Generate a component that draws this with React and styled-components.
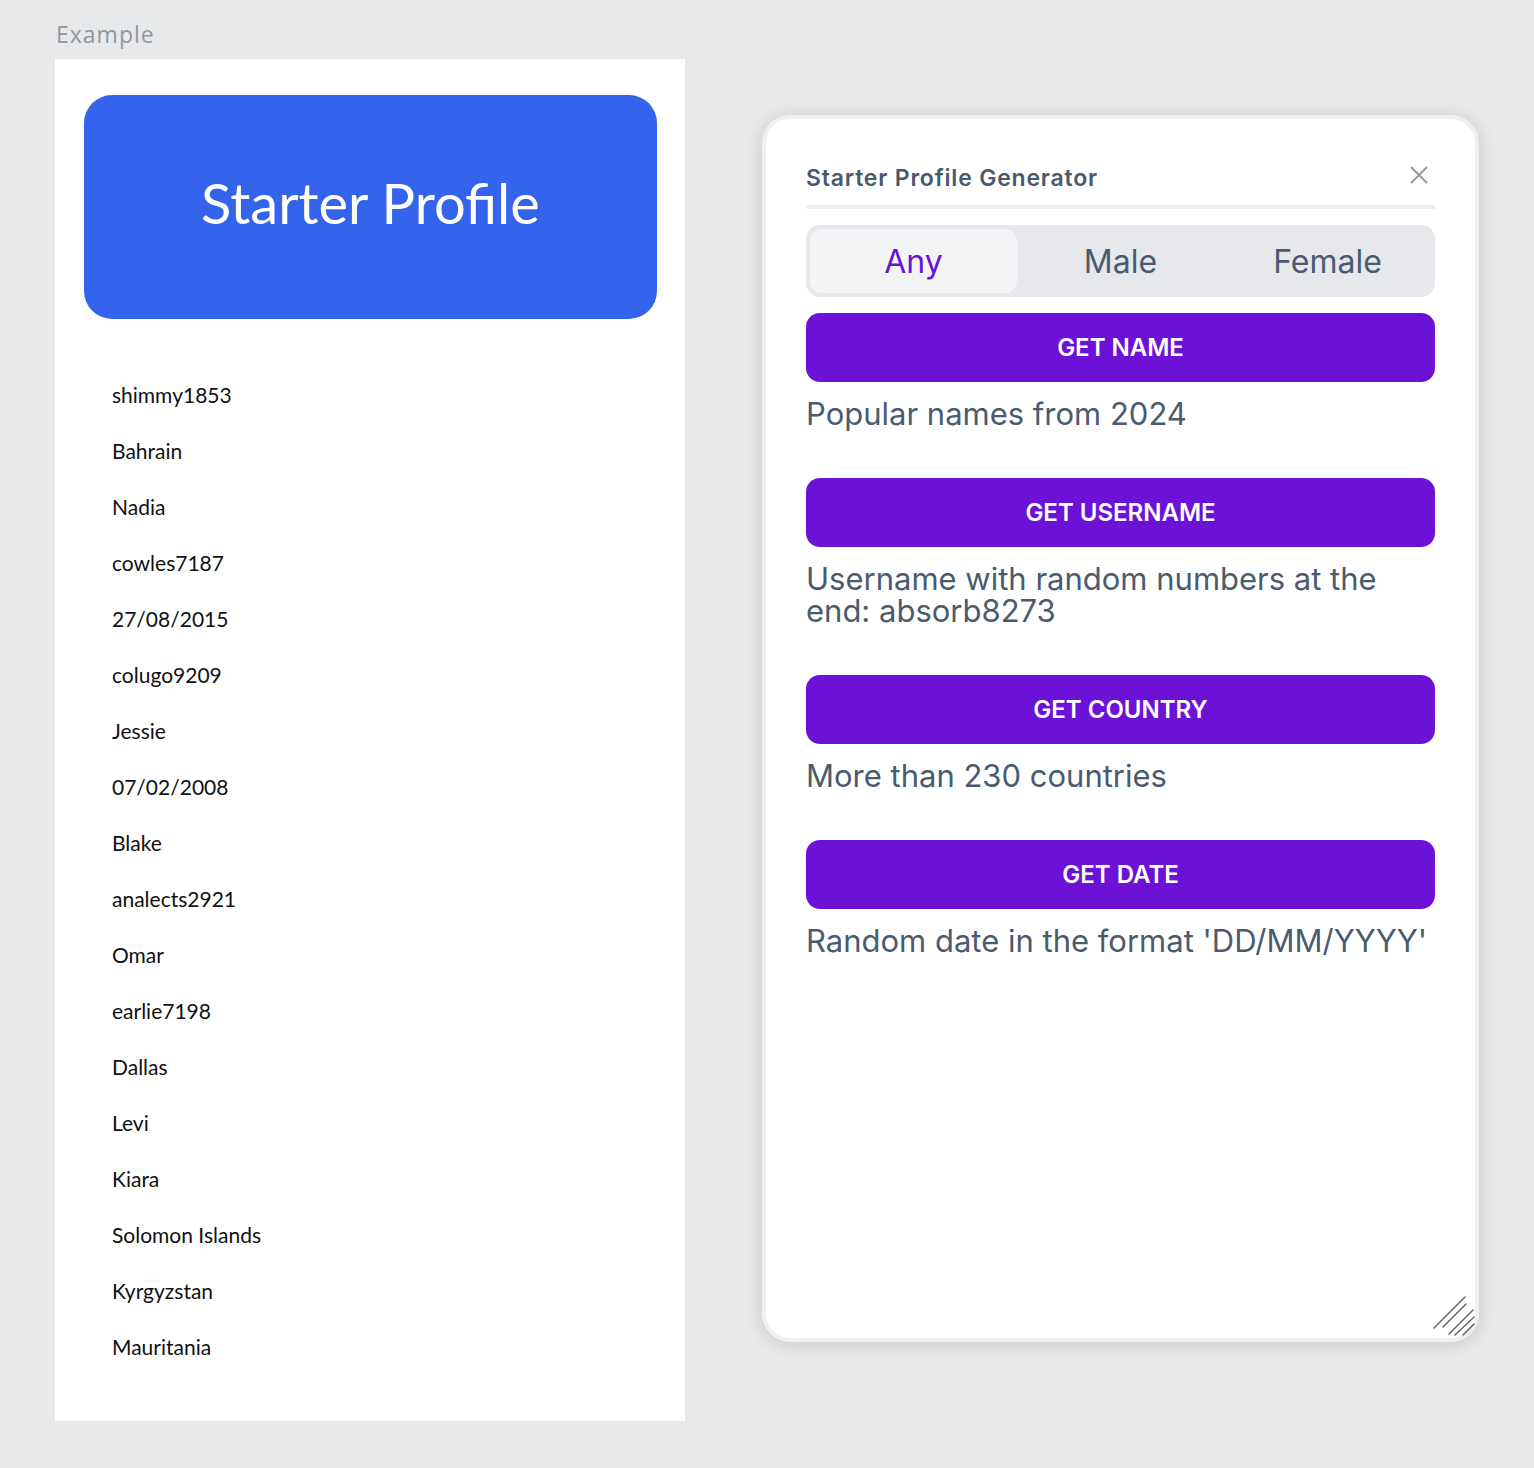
import React from "react";
import styled, { createGlobalStyle } from "styled-components";

const GlobalStyle = createGlobalStyle`
  html, body {
    margin: 0;
    padding: 0;
    background: #e8e9eb;
  }
  * {
    box-sizing: border-box;
  }
`;

const Page = styled.div`
  padding: 21px 55px 40px;
  min-height: 1468px;
`;

const Label = styled.div`
  font-family: "Open Sans", sans-serif;
  font-size: 23px;
  line-height: 26px;
  letter-spacing: 1px;
  color: #8f999f;
  margin-bottom: 12px;
  padding-left: 1px;
`;

const Row = styled.div`
  display: flex;
  align-items: flex-start;
  gap: 77px;
`;

const Preview = styled.div`
  width: 630px;
  background: #ffffff;
  padding: 36px 28px 46px 29px;
`;

const Hero = styled.div`
  height: 224px;
  border-radius: 28px;
  background: #3564ec;
  display: flex;
  align-items: center;
  justify-content: center;
  padding-bottom: 9px;
`;

const HeroTitle = styled.h1`
  margin: 0;
  font-family: Lato, sans-serif;
  font-weight: 400;
  font-size: 56px;
  color: #ffffff;
`;

const List = styled.ul`
  list-style: none;
  margin: 48px 0 0;
  padding: 0 0 0 28px;
`;

const Item = styled.li`
  height: 56px;
  line-height: 56px;
  font-family: Lato, sans-serif;
  font-size: 21px;
  color: #111111;
`;

const Panel = styled.div`
  position: relative;
  margin-top: 56px;
  width: 717px;
  height: 1227px;
  background: #ffffff;
  border: 4px solid #eff0f2;
  border-radius: 28px;
  box-shadow: 0 2px 18px rgba(0, 0, 0, 0.14);
  padding: 46px 40px 40px;
  display: flex;
  flex-direction: column;
`;

const Header = styled.div`
  display: flex;
  justify-content: space-between;
  align-items: flex-start;
  padding-bottom: 14px;
  border-bottom: 4px solid #edeef0;
`;

const PanelTitle = styled.h2`
  margin: 0;
  font-family: Inter, sans-serif;
  font-weight: 600;
  font-size: 23px;
  line-height: 26px;
  letter-spacing: 0.8px;
  color: #4a5a6e;
`;

const CloseButton = styled.button`
  border: none;
  background: none;
  padding: 0;
  margin: 1px 7px 0 0;
  width: 18px;
  height: 18px;
  display: flex;
  cursor: pointer;
`;

const Segments = styled.div`
  margin-top: 16px;
  height: 72px;
  padding: 4px;
  border-radius: 14px;
  background: #e6e8eb;
  display: grid;
  grid-template-columns: repeat(3, 1fr);
`;

const Segment = styled.button`
  border: none;
  border-radius: 12px;
  background: ${(p) => (p.$active ? "#f3f4f6" : "transparent")};
  color: ${(p) => (p.$active ? "#6a12d6" : "#4a5b70")};
  font-family: Inter, sans-serif;
  font-size: 32px;
  font-weight: 400;
  cursor: pointer;
`;

const Section = styled.div`
  margin-top: 16px;
  display: flex;
  flex-direction: column;
`;

const ActionButton = styled.button`
  height: 69px;
  border: none;
  border-radius: 14px;
  background: #6b12d6;
  color: #ffffff;
  font-family: Inter, sans-serif;
  font-size: 24px;
  font-weight: 600;
  text-transform: uppercase;
  cursor: pointer;
`;

const Description = styled.p`
  margin: 16px 0 32px;
  font-family: Inter, sans-serif;
  font-size: 31px;
  line-height: 32px;
  color: #4a5b70;
`;

const Grip = styled.svg`
  position: absolute;
  right: 0;
  bottom: 0;
  width: 48px;
  height: 48px;
`;

const profile = [
  "shimmy1853",
  "Bahrain",
  "Nadia",
  "cowles7187",
  "27/08/2015",
  "colugo9209",
  "Jessie",
  "07/02/2008",
  "Blake",
  "analects2921",
  "Omar",
  "earlie7198",
  "Dallas",
  "Levi",
  "Kiara",
  "Solomon Islands",
  "Kyrgyzstan",
  "Mauritania",
];

const actions = [
  { label: "Get name", text: "Popular names from 2024" },
  { label: "Get username", text: "Username with random numbers at the end: absorb8273" },
  { label: "Get country", text: "More than 230 countries" },
  { label: "Get date", text: "Random date in the format 'DD/MM/YYYY'" },
];

function App() {
  return (
    <Page>
      <GlobalStyle />
      <Label>Example</Label>
      <Row>
        <Preview>
          <Hero>
            <HeroTitle>Starter Profile</HeroTitle>
          </Hero>
          <List>
            {profile.map((p, i) => (
              <Item key={i}>{p}</Item>
            ))}
          </List>
        </Preview>

        <Panel>
          <Header>
            <PanelTitle>Starter Profile Generator</PanelTitle>
            <CloseButton aria-label="Close">
              <svg width="18" height="18" viewBox="0 0 18 18">
                <path d="M1 1 L17 17 M17 1 L1 17" stroke="#8d9ba5" strokeWidth="2" />
              </svg>
            </CloseButton>
          </Header>
          <Segments>
            <Segment $active>Any</Segment>
            <Segment>Male</Segment>
            <Segment>Female</Segment>
          </Segments>
          {actions.map((a) => (
            <Section key={a.label}>
              <ActionButton>{a.label}</ActionButton>
              <Description>{a.text}</Description>
            </Section>
          ))}
          <Grip viewBox="0 0 48 48">
            <g stroke="#6b6b6b" strokeWidth="1.6" strokeLinecap="round">
              <path d="M7 38 L38 7" />
              <path d="M16 37 L39 14" />
              <path d="M22 44 L46 20" />
              <path d="M28 45 L47 27" />
              <path d="M36 45 L47 34" />
            </g>
          </Grip>
        </Panel>
      </Row>
    </Page>
  );
}

export default App;
